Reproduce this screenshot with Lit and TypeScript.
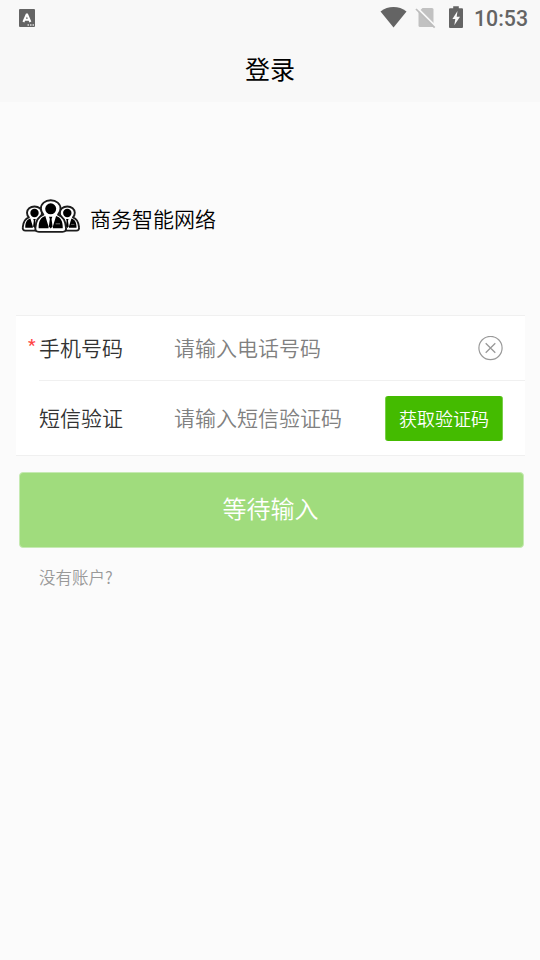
import { LitElement, html, css, svg } from "lit";
import { customElement } from "lit/decorators.js";

const person = (dx: number, dy: number, s: number) => svg`
  <g transform="translate(${dx} ${dy}) scale(${s})">
    <path d="M-12 32.500Q-16.300 32.500-15.600 28C-15 21-13 17-7.500 15C-9.300 13-10 11-10 8.800C-10 3.800-5.700.300 0 .300S10 3.800 10 8.800C10 11 9.300 13 7.500 15C13 17 15 21 15.600 28Q16.300 32.500 12 32.500Z"
      fill="#fff" stroke="#1c1c1c" stroke-width="${1.9 / s}" stroke-linejoin="round" />
    <circle cx="0" cy="9" r="5.600" fill="#000" />
    <path d="M-12.300 28.800C-12.500 22-10.500 17.800-5.500 16.300L-2.200 27V28.800ZM12.300 28.800C12.500 22 10.500 17.800 5.500 16.300L2.200 27V28.800ZM-1.700 17H1.700L.9 19.500L1.900 27L0 29L-1.900 27L-.9 19.500Z" fill="#000" />
    <path d="M5 24.300H9.500" stroke="#777" stroke-width="1" />
  </g>`;

@customElement("app-root")
export class AppRoot extends LitElement {
  static styles = css`
    :host {
      display: block;
      height: 960px;
      overflow: hidden;
      background: #fbfbfb;
      color: #000;
      font-family: "Noto Sans CJK SC", sans-serif;
      font-weight: 350;
    }
    svg { display: block; flex: none; }
    .top { height: 102px; background: #f8f8f8; }
    .status {
      height: 36px;
      display: flex;
      align-items: center;
      padding: 0 12px 0 19px;
    }
    .spacer { flex: 1; }
    .clock {
      font: 500 21.3px/36px Roboto, sans-serif;
      color: #646464;
      width: 54px;
      margin-left: 10px;
      padding-top: 2px;
      white-space: nowrap;
    }
    .title {
      margin: 0;
      font-size: 25px;
      font-weight: 400;
      line-height: 65px;
      text-align: center;
    }
    .brand {
      height: 214px;
      display: flex;
      align-items: center;
      padding: 0 0 0 21px;
      margin-bottom: -1px;
      box-sizing: border-box;
      font-size: 21px;
    }
    .brand span { margin-left: 9px; padding-top: 18px; line-height: 30px; }
    .brand svg { margin-top: 15px; }
    .card {
      margin: 0 15px 0 16px;
      height: 141px;
      box-sizing: border-box;
      background: #fff;
      border-top: 1px solid #f0f0f0;
      border-bottom: 1px solid #f0f0f0;
    }
    .row {
      display: flex;
      align-items: center;
      margin-left: 23px;
      padding-right: 22px;
      height: 64px;
      font-size: 21px;
      line-height: 30px;
      position: relative;
    }
    .row + .row { height: 74px; border-top: 1px solid #f0f0f0; }
    .label { width: 135px; color: #333; padding-bottom: 2px; }
    .hint { flex: 1; color: #808080; white-space: nowrap; padding-bottom: 2px; }
    .star {
      position: absolute;
      left: -11px;
      top: 19px;
      color: #f44;
      font: 500 17px/20px Roboto, sans-serif;
    }
    .code {
      width: 118px;
      height: 45px;
      box-sizing: border-box;
      border: 0 solid #7acf4a;
      border-width: 0 1px;
      padding: 0 0 1px;
      border-radius: 3px;
      background: #44bb00;
      color: #fff;
      font: inherit;
      font-size: 18px;
      line-height: 44px;
    }
    .submit {
      display: block;
      width: 505px;
      height: 76px;
      margin: 16px 0 0 19px;
      box-sizing: border-box;
      border: 1px solid #c6eab3;
      padding: 0 2px 4px 0;
      border-radius: 4px;
      background: #a0dc7d;
      color: #fff;
      font: inherit;
      font-size: 24px;
      line-height: 70px;
    }
    .foot {
      margin: 16px 0 0 39px;
      font-size: 16.5px;
      line-height: 26px;
      color: #999;
    }
  `;

  render() {
    return html`
      <header class="top">
        <div class="status">
          <svg width="16" height="18" viewBox="0 0 16 18">
            <rect width="16" height="18" rx="1" fill="#646464" />
            <path d="M4.400 13L7.900 5L11.400 13M5.800 10.800H10" fill="none" stroke="#fff" stroke-width="2" stroke-linejoin="bevel" />
            <path d="M8.500 16H10M11 16H12.500M13.500 16H15" stroke="#ddd" stroke-width="1.300" />
          </svg>
          <span class="spacer"></span>
          <svg width="84" height="36" viewBox="0 0 84 36">
            <path d="M.500 11.400C8 5.500 19 5.500 26.500 11.400L13.500 27.500Z" fill="#646464" />
            <path d="M42.500 8H52Q53.500 8 53.500 9.500V27H40Q38.500 27 38.500 25.500V12Z" fill="#c1c1c1" />
            <path d="M38 8.700L57 27.700" stroke="#f8f8f8" stroke-width="2" />
            <path d="M36 9L54.700 27.700" stroke="#bdbdbd" stroke-width="1.700" />
            <path d="M70 8.200H73.200V6.200H78.800V8.200H82Q83 8.200 83 9.200V27Q83 28 82 28H70Q69 28 69 27V9.200Q69 8.200 70 8.200Z" fill="#646464" />
            <path d="M77.500 11L72.400 19H75.300L74.300 25.300L80 16.800H76.700Z" fill="#f8f8f8" />
          </svg>
          <span class="clock">10:53</span>
        </div>
        <h1 class="title">登录</h1>
      </header>
      <div class="brand">
        <svg width="60" height="36" viewBox="0 0 60 36">
          ${person(13.5, 7.2, 0.75)} ${person(46.3, 7.2, 0.75)} ${person(29.7, 1, 0.98)}
        </svg>
        <span>商务智能网络</span>
      </div>
      <section class="card">
        <div class="row">
          <span class="star">*</span>
          <span class="label">手机号码</span>
          <span class="hint">请输入电话号码</span>
          <svg width="25" height="25" viewBox="0 0 25 25" fill="none" stroke="#999">
            <circle cx="12.500" cy="12" r="11.600" stroke-width="1.200" />
            <path d="M7.700 7.200L17.300 16.800M17.300 7.200L7.700 16.800" stroke-width="1.300" />
          </svg>
        </div>
        <div class="row">
          <span class="label">短信验证</span>
          <span class="hint">请输入短信验证码</span>
          <button class="code">获取验证码</button>
        </div>
      </section>
      <button class="submit">等待输入</button>
      <div class="foot">没有账户?</div>
    `;
  }
}
